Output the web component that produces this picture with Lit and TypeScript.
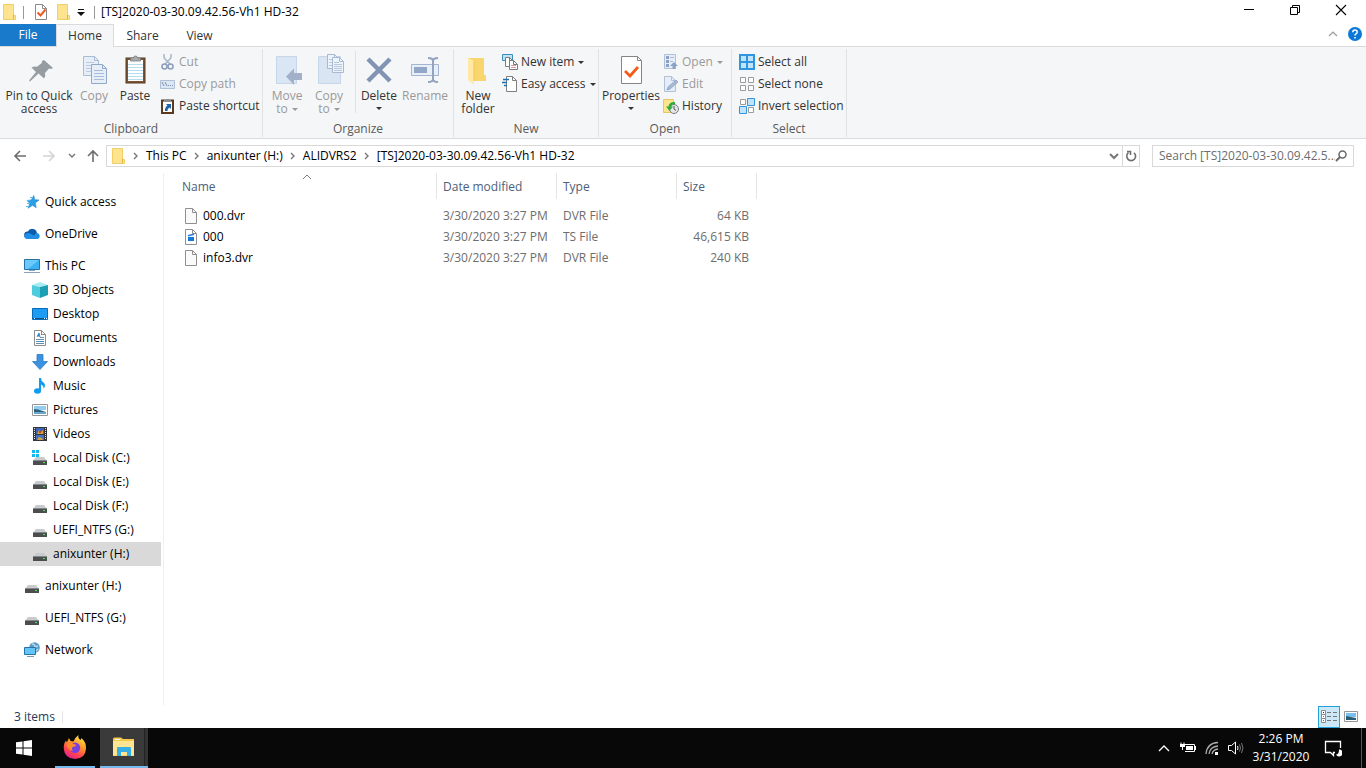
import { LitElement, html, css, svg, nothing } from "lit";
import { customElement, state } from "lit/decorators.js";
import { classMap } from "lit/directives/class-map.js";

type Glyph = [number, number, unknown];

const sheet = (x: number, y: number, w: number, h: number, fill: string, line: string) => svg`
  <path d="M${x + 0.5} ${y + 0.5}h${w - 5}l4 4v${h - 5}h-${w - 1}z" fill=${fill} stroke=${line}/>
  <path d="M${x + w - 4.5} ${y + 0.5}v4h4" fill="none" stroke=${line}/>`;

const drive = svg`
  <path d="M4 7h8l3 4H1z" fill="#c9cbcd"/><path d="M1 10h14v5H1z" fill="#4b4d4f"/>
  <path d="M1 10h14v1H1z" fill="#85878a"/><path d="M11 12h2v1h-2z" fill="#3bf04a"/>`;

const glyphs: Record<string, Glyph> = {
  folder: [16, 16, svg`<path d="M2 1h11v14H2z" fill="#ffe48f"/><path d="M2.500 .5h10v11h2v4h-12z" fill="#ffe48f" stroke="#f2cf66"/><path d="M12.500 11v4" stroke="#dfb544"/>`],
  check: [16, 16, svg`${sheet(2, 0, 12, 16, "#fff", "#8a8a8a")}<path d="M4.500 8.500l3 3 5-6" fill="none" stroke="#f05a22" stroke-width="2"/>`],
  qatMenu: [8, 8, svg`<path d="M1 1h6v1H1z" fill="#111"/><path d="M0 4h8L4 8z" fill="#111"/>`],
  minimize: [12, 12, svg`<path d="M1 5.500h10" stroke="#000"/>`],
  restore: [12, 12, svg`<path d="M1.500 3.500h7v7h-7zM3.500 3.500v-2h7v7h-2" fill="none" stroke="#000"/>`],
  close: [12, 12, svg`<path d="M1 1l10 10M11 1L1 11" stroke="#000" stroke-width="1.100"/>`],
  collapse: [10, 6, svg`<path d="M1 5l4-4 4 4" fill="none" stroke="#9a9a9a" stroke-width="1.200"/>`],
  help: [16, 16, svg`<circle cx="8" cy="8" r="7" fill="#0b78d7"/><path d="M5.800 6.300q0-2.300 2.200-2.300t2.200 2q0 1.200-1.200 1.900-1 .6-1 1.700M8 11v1.600" fill="none" stroke="#fff" stroke-width="1.500"/>`],
  pin: [32, 32, svg`<path d="M20 6l9 8-2 1-2-.6-4 4.500q1 3.500-1 5.600l-5.500-5L6.500 27 5 27.500l.5-1.500 6.500-8-4.500-4.500q2.500-1.700 5.500-.8l4.800-3.600L18 7z" fill="#959da3" transform="translate(1 0)"/>`],
  copy: [32, 32, svg`${sheet(5, 2, 16, 20, "#e7eef8", "#a9bcd6")}<path d="M8 8.500h8M8 11.500h8M8 14.500h8M8 17.500h6" stroke="#b9cce4"/>${sheet(13, 10, 16, 20, "#e7eef8", "#93a9c9")}<path d="M16 16.500h9M16 19.500h10M16 22.500h10M16 25.500h10" stroke="#a6bddb"/>`],
  paste: [32, 32, svg`<rect x="7" y="4" width="19" height="25" fill="#7b5433" stroke="#5b3a20"/><path d="M9 6h15v21H9z" fill="#fff"/><path d="M9 10.500h15M9 13.500h15M9 16.500h15M9 19.500h15M9 22.500h15M9 25.500h15" stroke="#b8dcf0"/><path d="M11.500 7V4h3q0-2 2-2t2 2h3v3z" fill="#a9acaf" stroke="#77797c" stroke-width=".8"/>`],
  cut: [16, 16, svg`<path d="M4 0q-.5 3 1 5l5 5M11 0q.5 3-1 5l-5 5" fill="none" stroke="#aab8cc" stroke-width="1.600"/><circle cx="4.500" cy="12.500" r="2.500" fill="none" stroke="#8d9fbc" stroke-width="1.600"/><circle cx="10.500" cy="12.500" r="2.500" fill="none" stroke="#8d9fbc" stroke-width="1.600"/>`],
  copyPath: [16, 16, svg`<path d="M.5 4.500h14v8H.5z" fill="#dce7f4" stroke="#aebfd6"/><path d="M2 6l2 4M5 6l2 4M8 9.500h1M10 9.500h1M12 9.500h1" stroke="#7f93b4"/>`],
  pasteLink: [16, 16, svg`<path d="M2 2.500h11v12.500H2z" fill="#fff" stroke="#5b3a20" stroke-width="2"/><path d="M4 3h7" stroke="#8b8e91" stroke-width="2"/><path d="M6 1.500h3" stroke="#8b8e91"/><path d="M6 6h5v5L9.500 9.500Q7 11 7.500 13H5q-.5-3.500 2.500-5.500z" fill="#1e62a8"/>`],
  moveTo: [32, 32, svg`<path d="M5.500 2.500h20v27h-20z" fill="#dbe6f4" stroke="#c5d5ea"/><path d="M31 19v7h-8v5l-8-8.500 8-8v4.500z" fill="#a3b1c8"/>`],
  copyTo: [32, 32, svg`<path d="M5.500 2.500h22v27h-22z" fill="#d9e5f3" stroke="#c5d5ea"/>${sheet(14, 0, 12, 15, "#edf3fa", "#a9b9cf")}${sheet(19, 3, 12, 16, "#edf3fa", "#a9b9cf")}<path d="M16 5.500h3M16 8.500h3M16 11.500h3M21 8.500h5M21 10.500h8M21 12.500h8M21 14.500h8M21 16.500h8" stroke="#b9c8dc"/>`],
  remove: [32, 32, svg`<path d="M5 5l22 22M27 5L5 27" stroke="#8294b4" stroke-width="4.500"/>`],
  rename: [32, 32, svg`<path d="M2.500 10.500h27v11h-27z" fill="#e8eff9" stroke="#a5b5cf"/><path d="M5 13h13v6H5z" fill="#92a6c6"/><path d="M19 4q5 0 5 3v18q0 3-5 3M29 4q-5 0-5 3M24 25q0 3 5 3" fill="none" stroke="#92a3bf" stroke-width="2"/>`],
  newFolder: [32, 32, svg`<path d="M6 4h16v17h2v6H10z" fill="#f9d56e"/><path d="M6 4l6 3v24l-6-5z" fill="#ffe9a5"/><path d="M12 7v20" stroke="#efc75d"/>`],
  newItem: [16, 16, svg`<path d="M.5.5h10v6H.5z" fill="#bfe2f3" stroke="#3d8db8"/>${sheet(3, 3, 9, 10, "#fff", "#7b7b7b")}${sheet(7, 6, 9, 10, "#fff", "#7b7b7b")}<path d="M9 11.500h5M9 13.500h5" stroke="#d89b9b"/>`],
  easy: [16, 16, svg`${sheet(4, 0, 11, 16, "#fff", "#808080")}<path d="M1 3.500h6M0 6.500h5M2 9.500h3" stroke="#1d6fb8" stroke-width="1.500"/>`],
  properties: [32, 32, svg`${sheet(6, 2, 21, 28, "#fff", "#858585")}<path d="M10 17l5 5 8-9" fill="none" stroke="#f45a16" stroke-width="2.800"/>`],
  open: [16, 16, svg`<path d="M1.500.5h11v14h-11z" fill="#e5edf8" stroke="#afc0d8"/><path d="M3 2h3v3H3zM3 6h3v3H3zM3 10h3v3H3z" fill="#8da2c3"/><path d="M7 3.500h4M7 7.500h3" stroke="#a8bad4"/><path d="M11 8l4 4h-2.500v3h-3v-3H7z" fill="#8da2c3"/>`],
  edit: [16, 16, svg`${sheet(1, 0, 12, 16, "#e5edf8", "#afc0d8")}<path d="M13 4l2 2-8 7-3 1 1-3z" fill="#a6b9d5" stroke="#8da2c3" stroke-width=".8"/>`],
  history: [16, 16, svg`<path d="M.5 1.500h10v13H.5z" fill="#ffe48f" stroke="#e6c764"/><circle cx="11" cy="11" r="4.500" fill="#e4e6e8" stroke="#777b80"/><path d="M11 8v3l2 1.500" fill="none" stroke="#555"/><path d="M12 4Q6 3.500 5.500 8.500H3l3.500 4.500 3.500-4.500H8Q8.500 6 12 6z" fill="#2fae3d"/>`],
  selAll: [16, 16, svg`<path d="M0 0h16v16H0z" fill="#2f95df"/><path d="M2 2h5v5H2zM9 2h5v5H9zM2 9h5v5H2zM9 9h5v5H9z" fill="#bfe4fb"/>`],
  selNone: [16, 16, svg`<path d="M1.500 1.500h5v5h-5zM9.500 1.500h5v5h-5zM1.500 9.500h5v5h-5zM9.500 9.500h5v5h-5z" fill="#fff" stroke="#9b9b9b"/>`],
  selInvert: [16, 16, svg`<path d="M1.500 1.500h5v5h-5zM9.500 9.500h5v5h-5z" fill="#fff" stroke="#9b9b9b"/><path d="M8.500.5h7v7h-7zM.5 8.500h7v7h-7z" fill="#bfe4fb" stroke="#2f95df"/>`],
  back: [14, 12, svg`<path d="M13 6H2M7 1L2 6l5 5" fill="none" stroke="#6d6d6d" stroke-width="1.600"/>`],
  forward: [14, 12, svg`<path d="M1 6h11M7 1l5 5-5 5" fill="none" stroke="#d4d4d4" stroke-width="1.600"/>`],
  up: [14, 14, svg`<path d="M7 13V2M2 7l5-5 5 5" fill="none" stroke="#6d6d6d" stroke-width="1.600"/>`],
  down: [8, 6, svg`<path d="M1 1l3 3 3-3" fill="none" stroke="#7a7a7a" stroke-width="1.500"/>`],
  drop: [10, 8, svg`<path d="M1 2l4 4 4-4" fill="none" stroke="#777" stroke-width="2"/>`],
  right: [6, 8, svg`<path d="M1 1l3 3-3 3" fill="none" stroke="#777" stroke-width="1.400"/>`],
  refresh: [12, 12, svg`<path d="M9 2.800A4.400 4.400 0 1 1 3.500 2.700M2 1.500h3.500V5" fill="none" stroke="#6f6f6f" stroke-width="1.600"/>`],
  search: [12, 12, svg`<circle cx="7.500" cy="4.500" r="3.500" fill="none" stroke="#6a6a6a" stroke-width="1.500"/><path d="M5 7L1 11" stroke="#6a6a6a" stroke-width="2"/>`],
  sortUp: [10, 6, svg`<path d="M1 5l4-4 4 4" fill="none" stroke="#7b7b7b"/>`],
  star: [16, 16, svg`<path d="M9.800 1.500l.9 4.200 4.300.3-3.700 2.900.9 4.800-3.700-2.500-4.300 3 1.600-4.900L3 6.500l4.300-.6z" fill="#2ba0e6" stroke="#1786d2" stroke-width=".6"/><path d="M6 3.500h2M3 6.500h3M3 9.500h2M2 12.500h3" stroke="#5db8ee"/>`],
  cloud: [16, 16, svg`<path d="M3.500 12.500a3.500 3.500 0 0 1 .3-7A5 5 0 0 1 13 6.500l-5 6z" fill="#0a5cad"/><path d="M4 13Q.5 13 .3 10.200 1 7 5 7l5 2.500 2.500-2.700Q15.700 7.500 15.700 10.200 15.500 13 12.500 13z" fill="#1f8fe6"/>`],
  pc: [16, 16, svg`<path d="M.5 1.500h15v10H.5z" fill="#39b1f3" stroke="#2674a8"/><path d="M1 2h14L4 11H1z" fill="#6cc9fa"/><path d="M5 12.500h6M0 14.500h16" stroke="#8ba4bb"/>`],
  cube: [16, 16, svg`<path d="M0 3l8-3 8 3-8 2z" fill="#a8ecf3"/><path d="M0 3l8 2v11l-8-3z" fill="#4fcbdc"/><path d="M8 5l8-2v10l-8 3z" fill="#1a9fb5"/>`],
  desktop: [16, 16, svg`<path d="M.5 2.500h15v11H.5z" fill="#1c9cf3" stroke="#0a6cb8"/><path d="M1 12.500h14" stroke="#0b4f88"/><path d="M2 12.500h1M12 12.500h1M14 12.500h1" stroke="#fff"/>`],
  documents: [16, 16, svg`${sheet(2, 0, 12, 16, "#fff", "#8d8d8d")}<path d="M5 7l2-4 1 4M8 7.500h4M4 9.500h8M4 11.500h4M4 13.500h8M9 4.500h1" fill="none" stroke="#6b8ba8"/><path d="M8 11h4v1H8zM5 6l2-3 1 4z" fill="#2b8ad0"/>`],
  downloads: [16, 16, svg`<path d="M5 .5h6v7h4.500L8 15.500.5 7.500H5z" fill="#3b92e0" stroke="#2c7bc4" stroke-width=".8"/>`],
  music: [16, 16, svg`<ellipse cx="5.500" cy="13" rx="3.500" ry="2.800" fill="#0e9bf0"/><path d="M7 0h2q0 3 2.500 4.500Q14.500 7 11.500 11q.5-3-2.500-4.500V13H7z" fill="#0e9bf0"/>`],
  pictures: [16, 16, svg`<path d="M.5 2.500h15v11H.5z" fill="#fff" stroke="#979797"/><path d="M2 4h12v4H2z" fill="#94cdf3"/><path d="M2 7l4 .5 8 2.500v2H2z" fill="#2c6378"/><path d="M2 10h12v2H2z" fill="#6aa7cb"/>`],
  videos: [16, 16, svg`<path d="M1 1h14v14H1z" fill="#33353a"/><path d="M4 2h8v6H4z" fill="#3b64b8"/><path d="M4 9h8v5H4z" fill="#4272bf"/><path d="M5 8l2-4 2 2 2-2v4zM5 14l2-3 3 1 1 2z" fill="#d7a33a"/><path d="M7 5h2v2H7z" fill="#c3433a"/><path d="M2.500 2v12M13.500 2v12" stroke="#e8e8e8" stroke-dasharray="1 1"/>`],
  disk: [16, 16, drive],
  sysDisk: [16, 16, svg`${drive}<path d="M0 0h3v3H0zM4 0h3v3H4zM0 4h3v3H0zM4 4h3v3H4z" fill="#14b6ee"/>`],
  network: [16, 16, svg`<circle cx="10.500" cy="5.500" r="5.300" fill="#5b9cc6"/><path d="M8 2q3 0 3 3l3-1M12 9l2-2" fill="none" stroke="#b5daed" stroke-width="1.400"/><path d="M.5 5.500h11v7H.5z" fill="#63c4f7" stroke="#2674a8"/><path d="M3 14.500h7" stroke="#7c9bb3"/>`],
  file: [16, 16, sheet(2, 0, 12, 16, "#fafafa", "#8f8f8f")],
  video: [16, 16, svg`${sheet(2, 0, 12, 16, "#fff", "#8f8f8f")}<path d="M5 8h6v4H5zM5 6l6-1.500V6L5 7.500z" fill="#1479d6"/>`],
  viewDetails: [18, 16, svg`<path d="M1.500 1.500h4v4h-4zM1.500 5.500h4v4h-4zM1.500 9.500h4v4h-4z" fill="#fff" stroke="#8b8b8b"/><path d="M7 3.500h4M13 3.500h4M7 7.500h4M13 7.500h4M7 11.500h4M13 11.500h4" stroke="#777"/><path d="M3 3h1v1H3z" fill="#333"/><path d="M3 7h1v1H3z" fill="#2b7fd0"/><path d="M3 11h1v1H3z" fill="#d03030"/>`],
  viewLarge: [14, 12, svg`<path d="M.5.5h13v10H.5z" fill="#fff" stroke="#979797"/><path d="M2 2h10v4H2z" fill="#79bff0"/><path d="M2 5l10 2v2H2z" fill="#2b5d75"/>`],
  windows: [16, 16, svg`<path d="M0 2.300l6.500-.9v6.100H0zM7.500 1.200L16 0v7.500H7.500zM0 8.500h6.500v6.100L0 13.700zM7.500 8.500H16V16l-8.500-1.200z" fill="#fff"/>`],
  firefox: [24, 24, svg`<defs><linearGradient id="fx" x1=".8" y1="0" x2=".3" y2="1"><stop offset="0" stop-color="#fff04d"/><stop offset=".4" stop-color="#ff9a26"/><stop offset=".75" stop-color="#ff4055"/><stop offset="1" stop-color="#e0208a"/></linearGradient></defs>
    <path d="M15.500 0q-1 3 2 5 1-.8.800-2 5 4 4.700 10.500Q22.500 23.500 12 24 1.500 23.500.7 13.500.7 8 3 5.500l.8 2L6 3l1.500 3 3 .5Q12.500 2 15.500 0z" fill="url(#fx)"/><circle cx="12" cy="12.800" r="5.200" fill="#7a3fe0"/><path d="M3.500 8.500q4-2.500 7 .5l3 1q-1.500 2-4 2-1.500 2.500 1 4-6.500-.5-7-7.500z" fill="#ff8a2a"/>`],
  explorer: [24, 20, svg`<path d="M1 2q0-1.500 1.500-1.500H9L11 2h11v17H1z" fill="#f5c84c"/><path d="M1 4h21v14.500H1z" fill="#ffe592"/><path d="M3 2h5v1H3z" fill="#fff"/><path d="M5 19v-8q0-1 1-1h12q1 0 1 1v8h-4v-4H9v4z" fill="#37aee4"/>`],
  trayUp: [12, 8, svg`<path d="M1 7l5-5 5 5" fill="none" stroke="#fff" stroke-width="1.300"/>`],
  battery: [16, 14, svg`<path d="M4 3.500h10.500v7H5" fill="none" stroke="#fff"/><path d="M6 5h7v4H6zM15 5h1v4h-1z" fill="#fff"/><path d="M1 1.500v2M4 1.500v2" stroke="#fff"/><path d="M0 3h5v3H3v3H2V6H0z" fill="#fff"/>`],
  wifi: [14, 14, svg`<path d="M1 13Q2 2 13 1.500M4 13q1-7.500 9-8M7 13q1-4.500 6-5" fill="none" stroke="#aaa" stroke-width="1.300"/><path d="M10 11h3v3h-3z" fill="#fff"/>`],
  sound: [16, 14, svg`<path d="M.5 4.500h3l4-3.500v12L3.500 9.500h-3z" fill="none" stroke="#fff"/><path d="M9.500 5q1 2 0 4" fill="none" stroke="#fff"/><path d="M11.500 3.500q2 3.500 0 7M13.500 2q3 5 0 10" fill="none" stroke="#777"/>`],
  notify: [18, 18, svg`<path d="M16.500 9V2.500h-15v11h5l3 3v-3H11" fill="none" stroke="#fff" stroke-width="1.300"/><path d="M15 10.500a3.500 3.500 0 1 1-3 5q3 0 3-5z" fill="#fff"/>`],
};

const icon = (name: string) => {
  const [w, h, body] = glyphs[name];
  return html`<svg width=${w} height=${h} viewBox="0 0 ${w} ${h}" aria-hidden="true">${body}</svg>`;
};

interface Command { icon: string; label: string; off?: boolean; menu?: boolean; size?: string; }
interface Place { icon: string; label: string; child?: boolean; }

const places: Place[] = [
  { icon: "star", label: "Quick access" },
  { icon: "cloud", label: "OneDrive" },
  { icon: "pc", label: "This PC" },
  { icon: "cube", label: "3D Objects", child: true },
  { icon: "desktop", label: "Desktop", child: true },
  { icon: "documents", label: "Documents", child: true },
  { icon: "downloads", label: "Downloads", child: true },
  { icon: "music", label: "Music", child: true },
  { icon: "pictures", label: "Pictures", child: true },
  { icon: "videos", label: "Videos", child: true },
  { icon: "sysDisk", label: "Local Disk (C:)", child: true },
  { icon: "disk", label: "Local Disk (E:)", child: true },
  { icon: "disk", label: "Local Disk (F:)", child: true },
  { icon: "disk", label: "UEFI_NTFS (G:)", child: true },
  { icon: "disk", label: "anixunter (H:)", child: true },
  { icon: "disk", label: "anixunter (H:)" },
  { icon: "disk", label: "UEFI_NTFS (G:)" },
  { icon: "network", label: "Network" },
];

const files = [
  ["file", "000.dvr", "3/30/2020 3:27 PM", "DVR File", "64 KB"],
  ["video", "000", "3/30/2020 3:27 PM", "TS File", "46,615 KB"],
  ["file", "info3.dvr", "3/30/2020 3:27 PM", "DVR File", "240 KB"],
];

const folderName = "[TS]2020-03-30.09.42.56-Vh1 HD-32";

@customElement("app-root")
export class AppRoot extends LitElement {
  @state() private current = 14;

  static styles = css`
    :host { display: flex; flex-direction: column; height: 100vh; overflow: hidden; background: #fff; color: #000; font: 12px/16px "Open Sans", "Noto Sans", sans-serif; }
    * { box-sizing: border-box; }
    svg { display: block; flex: none; }
    button, input { font: inherit; color: inherit; background: none; border: 0; padding: 0; margin: 0; }
    button { display: flex; align-items: center; justify-content: center; white-space: nowrap; }
    a { color: inherit; text-decoration: none; white-space: nowrap; }
    .title { display: flex; height: 24px; align-items: center; }
    .quick { display: flex; align-items: center; }
    .quick button { width: 22px; height: 24px; }
    .quick .first { width: 17px; }
    .quick .more { width: 14px; }
    .bar { width: 1px; height: 13px; margin: 0 6px; background: #999; }
    .name { flex: 1; margin: 0; font-size: 12px; font-weight: 400; }
    .window { display: flex; align-self: flex-start; padding-right: 2px; }
    .window button { width: 46px; height: 20px; }
    .tabs { display: flex; height: 23px; border-bottom: 1px solid #dadbdc; color: #333; }
    .tabs button { width: 57px; height: 23px; }
    .tabs .filetab { width: 56px; background: #1979ca; color: #fff; height: 22px; }
    .tabs .on { width: 58px; background: #f5f6f7; border: 1px solid #dadbdc; border-bottom: 0; }
    .tabs .push { margin-left: auto; }
    .tabs .small { width: 22px; height: 20px; }
    .ribbon { display: flex; height: 92px; padding: 2px 0 1px; background: #f5f6f7; border-bottom: 1px solid #dadbdc; color: #333; }
    .group { display: flex; flex-direction: column; border-right: 1px solid #e1e2e3; }
    .clipboard { min-width: 263px; } .organize { min-width: 191px; } .new { min-width: 145px; }
    .open { min-width: 133px; } .select { min-width: 115px; }
    .body { display: flex; flex: 1; padding-top: 2px; }
    .caption { text-align: center; color: #5a5a5a; height: 16px; }
    .big { flex-direction: column; justify-content: flex-start; padding-top: 3px; height: 67px; line-height: 13px; width: 48px; }
    .big span { white-space: pre-line; text-align: center; margin-top: 3px; }
    .big.w78 { width: 78px; } .big.w32 { width: 32px; } .big.w50 { width: 50px; }
    .big.w36 { width: 36px; } .big.w46 { width: 46px; } .big.w64 { width: 64px; }
    .arrow { display: inline-block; width: 0; height: 0; border: 3px solid transparent; border-top-color: currentColor; border-bottom: 0; margin-left: 4px; vertical-align: 2px; }
    .big > .arrow { margin: 5px 0 0; }
    .off { color: #9a9a9a; }
    .rule { width: 1px; margin: 0 0 8px 8px; background: #e1e2e3; }
    .stack { display: flex; flex-direction: column; align-items: flex-start; }
    .stack.inset { padding-left: 7px; }
    .stack button { height: 22px; gap: 3px; }
    .address { display: flex; align-items: center; height: 34px; padding: 0 12px 0 5px; flex: none; }
    .address > button { width: 29px; height: 22px; }
    .address > .thin { width: 18px; }
    .address > .up { width: 24px; margin-right: 1px; }
    .path { display: flex; flex: 1; align-items: center; height: 22px; border: 1px solid #d9d9d9; padding-left: 3px; margin-right: 12px; }
    .crumbs { display: flex; flex: 1; align-items: center; gap: 7px; }
    .path button { width: 16px; height: 20px; }
    .path .reload { width: 17px; border-left: 1px solid #d9d9d9; }
    .search { display: flex; align-items: center; width: 202px; height: 22px; border: 1px solid #d9d9d9; padding: 0 6px; }
    .search input { flex: 1; min-width: 0; outline: 0; }
    .search input::placeholder { color: #6d6d6d; opacity: 1; }
    .main { display: flex; flex: 1; min-height: 0; }
    .nav { width: 164px; flex: none; padding: 17px 2px 0 0; border-right: 1px solid #f0f0f0; }
    .nav ul { list-style: none; margin: 0; padding: 0; }
    .nav a { display: flex; align-items: center; gap: 5px; height: 24px; padding-left: 24px; }
    .nav li:not(.child) + li:not(.child), .nav .child + li:not(.child) { margin-top: 8px; }
    .nav .child a { padding-left: 32px; }
    .nav .on { background: #d9d9d9; }
    .list { flex: 1; }
    table { border-collapse: separate; border-spacing: 0; table-layout: fixed; width: 593px; }
    th { font-weight: 400; text-align: left; color: #4c607a; height: 26px; padding: 1px 0 0 6px; border-right: 1px solid #e5e5e5; }
    th:first-child { padding-left: 18px; position: relative; }
    th svg { position: absolute; left: 138px; top: 1px; }
    .c1 { width: 273px; } .c2, .c3 { width: 120px; } .c4 { width: 80px; }
    td { height: 21px; padding: 0 8px 0 6px; color: #6d6d6d; white-space: nowrap; }
    tbody::before { content: ""; display: block; height: 6px; }
    td:first-child { color: #000; padding-left: 19px; }
    td:last-child { text-align: right; }
    .file { display: flex; align-items: center; gap: 4px; }
    .status { display: flex; align-items: center; height: 23px; padding: 0 8px 0 14px; color: #1e395b; flex: none; }
    .status i { width: 1px; height: 12px; background: #e5e5e5; margin-left: 7px; }
    .views { display: flex; margin-left: auto; gap: 4px; }
    .views button { height: 22px; width: 14px; }
    .views .on { width: 22px; background: #cce8f6; border: 1px solid #26a0da; }
    .task { display: flex; height: 40px; flex: none; background: #080808; color: #fff; }
    .task button { width: 48px; height: 40px; }
    .task .run { width: 40px; margin: 0 5px 0 7px; border-bottom: 2px solid #76b9ed; }
    .task .live { background: #3a3a3a; border-bottom: 2px solid #76b9ed; }
    .task .live i { width: 4px; height: 38px; border-left: 1px solid #222; background: #333; margin-left: 8px; }
    .task .live svg { margin-left: 12px; }
    .tray { display: flex; margin-left: auto; padding-right: 4px; }
    .tray button { width: 24px; }
    .tray .clock { display: block; width: 66px; line-height: 18px; text-align: center; }
    .tray .note { width: 38px; }
    .edge { width: 1px; background: #555; margin-left: 9px; }
  `;

  private big(c: Command) {
    return html`<button class="big ${c.size ?? ""} ${c.off ? "off" : ""}" ?disabled=${c.off}>
      ${icon(c.icon)}<span>${c.label}${c.menu && c.off ? html`<b class="arrow"></b>` : nothing}</span>
      ${c.menu && !c.off ? html`<b class="arrow"></b>` : nothing}</button>`;
  }

  private small(c: Command) {
    return html`<button class=${c.off ? "off" : ""} ?disabled=${c.off}>${icon(c.icon)}<span>${c.label}${c.menu ? html`<b class="arrow"></b>` : nothing}</span></button>`;
  }

  private stack(list: Command[], inset = false) {
    return html`<div class=${classMap({ stack: true, inset })}>${list.map((c) => this.small(c))}</div>`;
  }

  private group(caption: string, body: unknown) {
    return html`<section class="group ${caption.toLowerCase()}" aria-label=${caption}><div class="body">${body}</div><div class="caption">${caption}</div></section>`;
  }

  private ribbon() {
    return html`<div class="ribbon">
      ${this.group("Clipboard", html`
        ${this.big({ icon: "pin", label: "Pin to Quick\naccess", size: "w78" })}
        ${this.big({ icon: "copy", label: "Copy", off: true, size: "w32" })}
        ${this.big({ icon: "paste", label: "Paste", size: "w50" })}
        ${this.stack([{ icon: "cut", label: "Cut", off: true }, { icon: "copyPath", label: "Copy path", off: true }, { icon: "pasteLink", label: "Paste shortcut" }])}`)}
      ${this.group("Organize", html`
        ${this.big({ icon: "moveTo", label: "Move\nto", off: true, menu: true })}
        ${this.big({ icon: "copyTo", label: "Copy\nto", off: true, menu: true, size: "w36" })}
        <div class="rule"></div>
        ${this.big({ icon: "remove", label: "Delete", menu: true, size: "w46" })}
        ${this.big({ icon: "rename", label: "Rename", off: true, size: "w46" })}`)}
      ${this.group("New", html`
        ${this.big({ icon: "newFolder", label: "New\nfolder" })}
        ${this.stack([{ icon: "newItem", label: "New item", menu: true }, { icon: "easy", label: "Easy access", menu: true }])}`)}
      ${this.group("Open", html`
        ${this.big({ icon: "properties", label: "Properties", menu: true, size: "w64" })}
        ${this.stack([{ icon: "open", label: "Open", off: true, menu: true }, { icon: "edit", label: "Edit", off: true }, { icon: "history", label: "History" }])}`)}
      ${this.group("Select", this.stack([{ icon: "selAll", label: "Select all" }, { icon: "selNone", label: "Select none" }, { icon: "selInvert", label: "Invert selection" }], true))}
    </div>`;
  }

  render() {
    return html`
      <header class="title">
        <div class="quick">
          <button class="first" aria-label="Window menu">${icon("folder")}</button><span class="bar"></span>
          <button aria-label="Properties">${icon("check")}</button>
          <button aria-label="New folder">${icon("folder")}</button>
          <button class="more" aria-label="Customize toolbar">${icon("qatMenu")}</button><span class="bar"></span>
        </div>
        <h1 class="name">${folderName}</h1>
        <div class="window">
          <button aria-label="Minimize">${icon("minimize")}</button>
          <button aria-label="Restore">${icon("restore")}</button>
          <button aria-label="Close">${icon("close")}</button>
        </div>
      </header>
      <nav class="tabs" aria-label="Ribbon tabs">
        <button class="filetab">File</button><button class="on">Home</button><button>Share</button><button>View</button>
        <button class="push small" aria-label="Collapse ribbon">${icon("collapse")}</button>
        <button class="small" aria-label="Help">${icon("help")}</button>
      </nav>
      ${this.ribbon()}
      <div class="address">
        <button aria-label="Back">${icon("back")}</button>
        <button aria-label="Forward">${icon("forward")}</button>
        <button class="thin" aria-label="Recent locations">${icon("down")}</button>
        <button class="up" aria-label="Up">${icon("up")}</button>
        <div class="path">
          <div class="crumbs">${icon("folder")}${["This PC", "anixunter (H:)", "ALIDVRS2", folderName].map((p) => html`${icon("right")}<a href="#">${p}</a>`)}</div>
          <button aria-label="Previous locations">${icon("drop")}</button>
          <button class="reload" aria-label="Refresh">${icon("refresh")}</button>
        </div>
        <div class="search"><input type="text" aria-label="Search" placeholder="Search [TS]2020-03-30.09.42.5..." />${icon("search")}</div>
      </div>
      <div class="main">
        <nav class="nav" aria-label="Folders"><ul>
          ${places.map((p, i) => html`<li class=${classMap({ child: !!p.child })}>
            <a href="#" class=${classMap({ on: i === this.current })} @click=${() => (this.current = i)}>${icon(p.icon)}${p.label}</a></li>`)}
        </ul></nav>
        <main class="list">
          <table>
            <colgroup><col class="c1" /><col class="c2" /><col class="c3" /><col class="c4" /></colgroup>
            <thead><tr><th>Name${icon("sortUp")}</th><th>Date modified</th><th>Type</th><th>Size</th></tr></thead>
            <tbody>${files.map(([pic, name, ...rest]) => html`<tr><td><div class="file">${icon(pic)}${name}</div></td>${rest.map((t) => html`<td>${t}</td>`)}</tr>`)}</tbody>
          </table>
        </main>
      </div>
      <footer class="status"><span>3 items</span><i></i>
        <div class="views"><button class="on" aria-label="Details view">${icon("viewDetails")}</button><button aria-label="Large icons view">${icon("viewLarge")}</button></div>
      </footer>
      <div class="task">
        <button aria-label="Start">${icon("windows")}</button>
        <button class="run" aria-label="Firefox">${icon("firefox")}</button>
        <button class="live" aria-label="File Explorer">${icon("explorer")}<i></i></button>
        <div class="tray">
          <button aria-label="Show hidden icons">${icon("trayUp")}</button>
          <button aria-label="Battery">${icon("battery")}</button>
          <button aria-label="Wi-Fi">${icon("wifi")}</button>
          <button aria-label="Volume">${icon("sound")}</button>
          <button class="clock">2:26 PM<br />3/31/2020</button>
          <button class="note" aria-label="Notifications">${icon("notify")}</button>
          <span class="edge"></span>
        </div>
      </div>`;
  }
}
